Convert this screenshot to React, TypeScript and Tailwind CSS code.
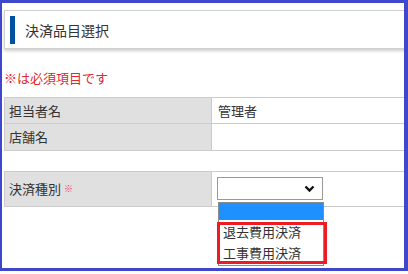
import React from "react";

export default function App() {
  const font = { fontFamily: '"Noto Sans CJK JP", "Noto Sans", sans-serif' };
  return (
    <div className="w-[408px] h-[274px] bg-white overflow-hidden" style={font}>
      <div className="relative h-[271px] w-[408px] border-[#3f48cc] border-t-[3px] border-l-2 border-r-4 border-b-[3px] overflow-hidden bg-white">
        <div className="w-[460px] pl-[2px] pt-[7px]">
          {/* header */}
          <div className="flex items-center h-[39px] border border-[#d0d0d0] bg-white shadow-[0_2px_3px_rgba(0,0,0,0.2)] pl-[5px]">
            <div className="w-[5px] h-[28px] bg-[#0050a0]" />
            <div className="ml-[10px] text-[14px] text-[#333] leading-none">決済品目選択</div>
          </div>
          {/* required note */}
          <div className="mt-[21px] h-[16px] text-[13px] leading-[16px] text-[#e0282e]">※は必須項目です</div>
          {/* table */}
          <div className="mt-[11px] border-t border-[#cccccc]">
            <div className="flex h-[26px] border-b border-[#cccccc]">
              <div className="w-[208px] bg-[#e0e0e0] border-l border-r border-[#cccccc] flex items-center pl-[4px] text-[13px] text-[#333]">担当者名</div>
              <div className="flex-1 flex items-center pl-[6px] text-[13px] text-[#333]">管理者</div>
            </div>
            <div className="flex h-[27px] border-b border-[#cccccc]">
              <div className="w-[208px] bg-[#e0e0e0] border-l border-r border-[#cccccc] flex items-center pl-[4px] text-[13px] text-[#333]">店舗名</div>
              <div className="flex-1" />
            </div>
          </div>
          <div className="mt-[20px] border-t border-b border-[#cccccc] flex h-[36px]">
            <div className="w-[208px] bg-[#e0e0e0] border-l border-r border-[#cccccc] flex items-center pl-[4px] text-[13px] text-[#333]">
              決済種別<span className="ml-[3px] text-[9px] text-[#e8405a]">※</span>
            </div>
            <div className="flex-1 pl-[5px] pt-[5px]">
              <div className="w-[106px] h-[23px] border border-[#999] bg-white flex items-center justify-end pr-[7px]">
                <svg width="11" height="8" viewBox="0 0 11 8">
                  <path d="M1.5 1.5 L5.5 5.5 L9.5 1.5" fill="none" stroke="#111" strokeWidth="2.4" />
                </svg>
              </div>
            </div>
          </div>
        </div>
        {/* dropdown list */}
        <div className="absolute left-[216px] top-[199px] w-[106px] h-[64px] border border-[#8a8a8a] bg-white text-[13px] text-[#333]">
          <div className="h-[17px] bg-[#1e90ff]" />
          <div className="h-[22px] flex items-center pl-[4px] pt-[2px]">退去費用決済</div>
          <div className="h-[22px] flex items-center pl-[4px]">工事費用決済</div>
        </div>
        <div className="absolute left-[215px] top-[219px] w-[110px] h-[42px] border-[3px] border-[#ed1c24]" />
      </div>
    </div>
  );
}
